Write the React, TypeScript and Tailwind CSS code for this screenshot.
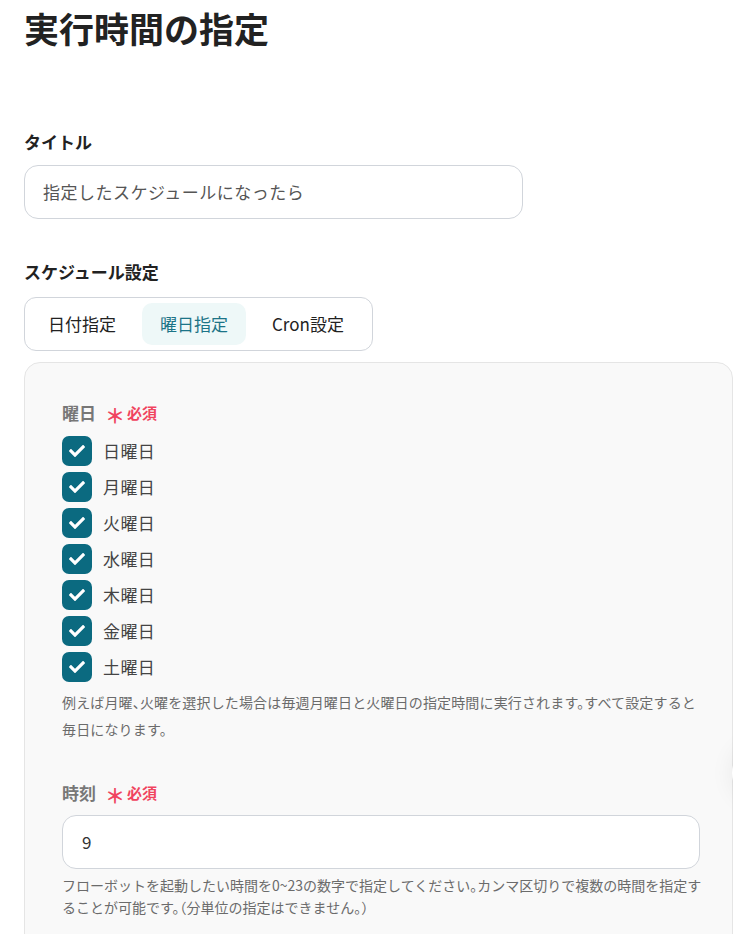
import { FaCheck } from 'react-icons/fa';

const days = ['日曜日', '月曜日', '火曜日', '水曜日', '木曜日', '金曜日', '土曜日'];

function Required() {
  return (
    <span className="ml-[9px] flex items-center text-[15px] font-bold text-[#f0445f]">
      <span className="mr-[2px] text-[20px] leading-none translate-y-[3px]">＊</span>
      必須
    </span>
  );
}

export default function App() {
  return (
    <div
      className="w-[733px] h-[934px] overflow-hidden bg-white text-[#222]"
      style={{ fontFamily: '"Noto Sans CJK JP", "Noto Sans", sans-serif' }}
    >
      <div className="px-6">
        <h1 className="mt-[6px] text-[35px] leading-[44px] font-bold">実行時間の指定</h1>

        <div className="mt-[80px] text-[17px] leading-[24px] font-bold">タイトル</div>
        <div className="mt-[11px] w-[499px] h-[54px] rounded-[14px] border border-[#d1d5db] flex items-center px-[18px] text-[17px] tracking-[0.5px] text-[#555]">
          指定したスケジュールになったら
        </div>

        <div className="mt-[41px] text-[17px] leading-[24px] font-bold">スケジュール設定</div>
        <div className="mt-[13px] w-[349px] h-[54px] rounded-[12px] border border-[#d1d5db] flex items-center px-[5px] gap-[8px] text-[17px]">
          <div className="px-[18px] h-[42px] flex items-center text-[#222]">日付指定</div>
          <div className="px-[18px] h-[42px] flex items-center rounded-[10px] bg-[#eef8f8] text-[#1c7487]">曜日指定</div>
          <div className="px-[18px] h-[42px] flex items-center text-[#222]">Cron設定</div>
        </div>
      </div>

      <div className="relative mt-[11px] ml-6 w-[709px] h-[700px] rounded-t-[16px] border border-[#e5e5e5] bg-[#f9f9f9] pl-[37px] pr-[26px] pt-[38px]">
        <div className="flex items-center text-[17px] leading-[24px] font-bold text-[#777]">
          曜日
          <Required />
        </div>
        <div className="mt-[11px] flex flex-col gap-[6px]">
          {days.map((d) => (
            <label key={d} className="flex items-center h-[30px]">
              <span className="w-[30px] h-[30px] rounded-[7px] bg-[#0b6a80] flex items-center justify-center">
                <FaCheck className="w-[16px] h-[16px] text-white" />
              </span>
              <span className="ml-[11px] text-[17px] tracking-[0.4px] text-[#444]">{d}</span>
            </label>
          ))}
        </div>
        <p className="mt-[7px] text-[14px] leading-[27px] tracking-[0.15px] text-[#6b6b6b] [font-feature-settings:'halt']">
          例えば月曜、火曜を選択した場合は毎週月曜日と火曜日の指定時間に実行されます。すべて設定すると毎日になります。
        </p>

        <div className="mt-[38px] flex items-center text-[17px] leading-[24px] font-bold text-[#777]">
          時刻
          <Required />
        </div>
        <div className="mt-[10px] w-[638px] h-[54px] rounded-[14px] border border-[#d1d5db] bg-white flex items-center px-[19px] text-[17px] text-[#333]">
          9
        </div>
        <p className="mt-[5px] text-[14px] leading-[22px] text-[#6b6b6b] [font-feature-settings:'halt']">
          フローボットを起動したい時間を0~23の数字で指定してください。カンマ区切りで複数の時間を指定することが可能です。（分単位の指定はできません。）
        </p>

        <div className="absolute right-[-60px] top-[380px] w-[60px] h-[60px] rounded-full bg-white shadow-[0_0_24px_rgba(0,0,0,0.07)]" />
      </div>
    </div>
  );
}
